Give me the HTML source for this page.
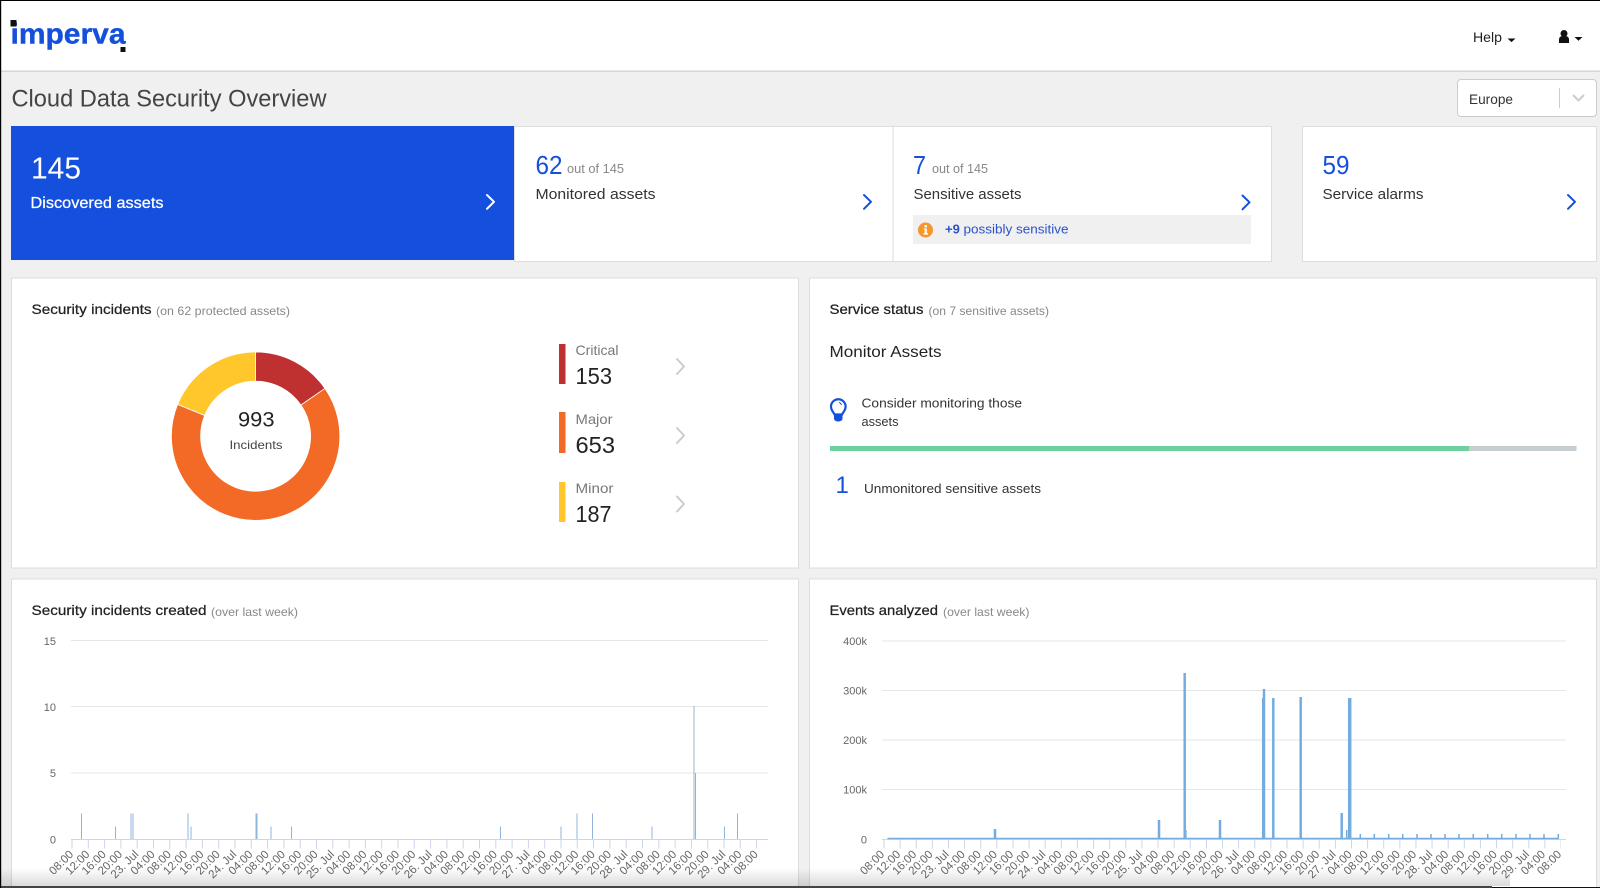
<!DOCTYPE html>
<html lang="en">
<head>
<meta charset="utf-8">
<title>Cloud Data Security Overview</title>
<style>
html,body{margin:0;padding:0;width:1600px;height:888px;overflow:hidden;background:#f0f0f0}
svg{display:block}
text{font-family:"Liberation Sans",sans-serif}
.t{font-size:14px;fill:#222;stroke:#222;stroke-width:.25}
.s{font-size:12px;fill:#888}
.c{fill:none;stroke-width:2;stroke-linecap:round;stroke-linejoin:round}
.y{font-size:11px;fill:#666;text-anchor:end}
.x text{font-size:11.5px;fill:#666;text-anchor:end}
</style>
</head>
<body>
<svg width="1600" height="888" viewBox="0 0 1600 888" xmlns="http://www.w3.org/2000/svg">
<defs><linearGradient id="fade" x1="0" y1="0" x2="0" y2="1"><stop offset="0" stop-color="#000" stop-opacity="0"/><stop offset="1" stop-color="#000" stop-opacity=".14"/></linearGradient></defs>
<rect width="1600" height="888" fill="#f0f0f0"/>
<!-- header -->
<rect width="1600" height="71" fill="#fff"/>
<rect y="70.5" width="1600" height="1.5" fill="#d6d6d6"/>
<text x="10.5" y="43.5" font-size="29" font-weight="700" fill="#1550dc" stroke="#1550dc" stroke-width=".4" textLength="115" lengthAdjust="spacingAndGlyphs">imperva</text>
<rect x="10.5" y="20" width="6" height="6.500" fill="#111"/>
<rect x="120.5" y="47" width="5" height="5" fill="#111"/>
<text x="1473" y="42" font-size="14" fill="#222" textLength="29" lengthAdjust="spacingAndGlyphs">Help</text>
<path d="M1507.5 38.5h8l-4 3.6z" fill="#111"/>
<circle cx="1564" cy="33.5" r="3.5" fill="#111"/>
<path d="M1559 43v-3.5c0-2 1.4-3.3 2.6-3.3h4.800c1.200 0 2.600 1.300 2.600 3.300V43z" fill="#111"/>
<path d="M1574.500 37h8l-4 3.800z" fill="#111"/>
<!-- title + select -->
<text x="11.500" y="106.500" font-size="24" fill="#444" textLength="315" lengthAdjust="spacingAndGlyphs">Cloud Data Security Overview</text>
<rect x="1457.500" y="79.500" width="139" height="37" rx="3.500" fill="#fff" stroke="#ccc"/>
<text x="1469" y="104" font-size="14" fill="#333" textLength="44" lengthAdjust="spacingAndGlyphs">Europe</text>
<rect x="1559" y="88" width="1" height="20" fill="#ccc"/>
<path d="M1573 95l5.500 5.500 5.500-5.500" fill="none" stroke="#ccc" stroke-width="2"/>
<!-- KPI cards -->
<rect x="11" y="126" width="503" height="134" fill="#1450dd"/>
<text x="31" y="178.500" font-size="31" fill="#fff" textLength="50" lengthAdjust="spacingAndGlyphs">145</text>
<text x="30.500" y="208" font-size="16" fill="#fff" stroke="#fff" stroke-width=".25" textLength="133" lengthAdjust="spacingAndGlyphs">Discovered assets</text>
<path class="c" d="M487 195l7 6.800-7 7" stroke="#fff"/>
<rect x="514.500" y="126.500" width="757" height="135" fill="#fff" stroke="#ddd"/>
<rect x="892.500" y="126" width="1" height="135" fill="#ddd"/>
<text x="535.500" y="174" font-size="26" fill="#1550dc" textLength="27" lengthAdjust="spacingAndGlyphs">62</text>
<text x="567" y="173" font-size="12.500" fill="#888" textLength="57" lengthAdjust="spacingAndGlyphs">out of 145</text>
<text x="535.500" y="199" font-size="15" fill="#333" textLength="120" lengthAdjust="spacingAndGlyphs">Monitored assets</text>
<path class="c" d="M864 195l7 6.800-7 7" stroke="#1550dc"/>
<text x="913" y="174" font-size="26" fill="#1550dc" textLength="13" lengthAdjust="spacingAndGlyphs">7</text>
<text x="932" y="173" font-size="12.500" fill="#888" textLength="56" lengthAdjust="spacingAndGlyphs">out of 145</text>
<text x="913.500" y="199" font-size="15" fill="#333" textLength="108" lengthAdjust="spacingAndGlyphs">Sensitive assets</text>
<path class="c" d="M1242.500 195.500l7 6.800-7 7" stroke="#1550dc"/>
<rect x="913" y="215" width="338" height="29" fill="#f0f0f0"/>
<circle cx="925.500" cy="230" r="7.500" fill="#f7962b"/>
<rect x="924.500" y="225" width="2.400" height="2.400" fill="#fff"/>
<path d="M923.800 228.500h3.100v4.700h1.100v1.400h-4.500v-1.400h1.100v-3.300h-.8z" fill="#fff"/>
<text x="945" y="233.500" font-size="13" font-weight="700" fill="#2a52c8">+9</text>
<text x="963.500" y="233.500" font-size="13" fill="#2a52c8" textLength="105" lengthAdjust="spacingAndGlyphs">possibly sensitive</text>
<rect x="1302.500" y="126.500" width="294" height="135" fill="#fff" stroke="#ddd"/>
<text x="1322.500" y="174" font-size="26" fill="#1550dc" textLength="27" lengthAdjust="spacingAndGlyphs">59</text>
<text x="1322.500" y="199" font-size="15" fill="#333" textLength="101" lengthAdjust="spacingAndGlyphs">Service alarms</text>
<path class="c" d="M1568 195l7 6.800-7 7" stroke="#1550dc"/>
<!-- panels -->
<rect x="11.500" y="278" width="787" height="290" fill="#fff" stroke="#ddd"/>
<rect x="809.500" y="278" width="787" height="290" fill="#fff" stroke="#ddd"/>
<rect x="11.500" y="579" width="787" height="320" fill="#fff" stroke="#ddd"/>
<rect x="809.500" y="579" width="787" height="320" fill="#fff" stroke="#ddd"/>
<!-- security incidents -->
<text class="t" x="31.500" y="314" textLength="120" lengthAdjust="spacingAndGlyphs">Security incidents</text>
<text class="s" x="156" y="315" textLength="134" lengthAdjust="spacingAndGlyphs">(on 62 protected assets)</text>
<path d="M255.600 352A84.200 84.200 0 0 1 324.960 388.470L300.910 405.020A55 55 0 0 0 255.600 381.200Z" fill="#bf3030" stroke="#fff" stroke-width=".8"/>
<path d="M324.960 388.470A84.200 84.200 0 1 1 177.640 404.390L204.680 415.420A55 55 0 1 0 300.910 405.020Z" fill="#f26a25" stroke="#fff" stroke-width=".8"/>
<path d="M177.640 404.390A84.200 84.200 0 0 1 255.600 352L255.600 381.200A55 55 0 0 0 204.680 415.420Z" fill="#ffc72c" stroke="#fff" stroke-width=".8"/>
<text x="238" y="426.500" font-size="21" fill="#222" textLength="36.500" lengthAdjust="spacingAndGlyphs">993</text>
<text x="229.500" y="449" font-size="12" fill="#444" textLength="53" lengthAdjust="spacingAndGlyphs">Incidents</text>
<rect x="559" y="344" width="6.500" height="40" fill="#bf3030"/>
<rect x="559" y="412" width="6.500" height="41" fill="#f26a25"/>
<rect x="559" y="482" width="6.500" height="40" fill="#ffc72c"/>
<text x="575.500" y="355" font-size="14" fill="#777" textLength="43" lengthAdjust="spacingAndGlyphs">Critical</text>
<text x="575.500" y="384" font-size="23" fill="#222" textLength="36.500" lengthAdjust="spacingAndGlyphs">153</text>
<text x="575.500" y="424" font-size="14" fill="#777" textLength="37" lengthAdjust="spacingAndGlyphs">Major</text>
<text x="575.500" y="453" font-size="23" fill="#222" textLength="39.500" lengthAdjust="spacingAndGlyphs">653</text>
<text x="575.500" y="493" font-size="14" fill="#777" textLength="38" lengthAdjust="spacingAndGlyphs">Minor</text>
<text x="575.500" y="522" font-size="23" fill="#222" textLength="36" lengthAdjust="spacingAndGlyphs">187</text>
<path class="c" d="M677 359l7 7.500-7 7.500" stroke="#ccc"/>
<path class="c" d="M677 428l7 7.500-7 7.500" stroke="#ccc"/>
<path class="c" d="M677 496.500l7 7.500-7 7.500" stroke="#ccc"/>
<!-- service status -->
<text class="t" x="829.500" y="314" textLength="94" lengthAdjust="spacingAndGlyphs">Service status</text>
<text class="s" x="928.500" y="315" textLength="120.500" lengthAdjust="spacingAndGlyphs">(on 7 sensitive assets)</text>
<text x="829.500" y="357" font-size="16" fill="#222" textLength="112" lengthAdjust="spacingAndGlyphs">Monitor Assets</text>
<path d="M834.500 414.500c-1-2.500-3.500-4-3.500-8a7.300 7.300 0 0 1 14.600 0c0 4-2.500 5.500-3.500 8z" fill="none" stroke="#1550dc" stroke-width="2.200"/>
<path d="M834 414h8.500v4.500c0 1.800-1.800 3-4.250 3s-4.250-1.200-4.250-3z" fill="#1550dc"/>
<path d="M839 402.500a3.500 3.500 0 0 1 2.500 2.500" fill="none" stroke="#1550dc" stroke-width="1"/>
<text x="861.500" y="407.500" font-size="13" fill="#333" textLength="160.500" lengthAdjust="spacingAndGlyphs">Consider monitoring those</text>
<text x="861.500" y="426" font-size="13" fill="#333" textLength="37" lengthAdjust="spacingAndGlyphs">assets</text>
<rect x="830" y="446" width="639" height="5" fill="#6ed09d"/>
<rect x="1469" y="446" width="107.500" height="5" fill="#c7ced1"/>
<text x="835.500" y="493" font-size="24" fill="#1550dc">1</text>
<text x="864" y="493" font-size="13" fill="#333" textLength="177" lengthAdjust="spacingAndGlyphs">Unmonitored sensitive assets</text>
<!-- chart 1 -->
<text class="t" x="31.500" y="615" textLength="175" lengthAdjust="spacingAndGlyphs">Security incidents created</text>
<text class="s" x="211" y="616" textLength="87" lengthAdjust="spacingAndGlyphs">(over last week)</text>
<path d="M71 640.500H768M71 706.500H768M71 773H768" stroke="#e6e6e6" fill="none"/>
<path d="M71 839.500H768" stroke="#ccd6eb" fill="none"/>
<path d="M71.500 844H759" stroke="#ccd6eb" stroke-width="9" stroke-dasharray="1 15.300" fill="none"/>
<text class="y" x="56" y="645">15</text>
<text class="y" x="56" y="711">10</text>
<text class="y" x="56" y="777">5</text>
<text class="y" x="56" y="843.500">0</text>
<path fill="none" stroke="#8fb5dd" d="M81.500 813.500V839M115.500 826.500V839M131 813.500V839M133 813.500V839M188 813.500V839M191 826.500V839M256 813.500V839M257 813.500V839M271 826.500V839M291.500 826.500V839M500.500 826.500V839M561 826.500V839M577 813.500V839M592.500 813.500V839M652 826.500V839M694 706V839M695.500 773V839M724.500 826.500V839M737.500 813.500V839"/>
<g class="x">
<text transform="translate(74,855) rotate(-45)">08:00</text><text transform="translate(90.300,855) rotate(-45)">12:00</text><text transform="translate(106.600,855) rotate(-45)">16:00</text><text transform="translate(122.900,855) rotate(-45)">20:00</text><text transform="translate(139.200,855) rotate(-45)">23. Jul</text><text transform="translate(155.500,855) rotate(-45)">04:00</text>
<text transform="translate(171.800,855) rotate(-45)">08:00</text><text transform="translate(188.100,855) rotate(-45)">12:00</text><text transform="translate(204.400,855) rotate(-45)">16:00</text><text transform="translate(220.700,855) rotate(-45)">20:00</text><text transform="translate(237,855) rotate(-45)">24. Jul</text><text transform="translate(253.300,855) rotate(-45)">04:00</text>
<text transform="translate(269.600,855) rotate(-45)">08:00</text><text transform="translate(285.900,855) rotate(-45)">12:00</text><text transform="translate(302.200,855) rotate(-45)">16:00</text><text transform="translate(318.500,855) rotate(-45)">20:00</text><text transform="translate(334.800,855) rotate(-45)">25. Jul</text><text transform="translate(351.100,855) rotate(-45)">04:00</text>
<text transform="translate(367.400,855) rotate(-45)">08:00</text><text transform="translate(383.700,855) rotate(-45)">12:00</text><text transform="translate(400,855) rotate(-45)">16:00</text><text transform="translate(416.300,855) rotate(-45)">20:00</text><text transform="translate(432.600,855) rotate(-45)">26. Jul</text><text transform="translate(448.900,855) rotate(-45)">04:00</text>
<text transform="translate(465.200,855) rotate(-45)">08:00</text><text transform="translate(481.500,855) rotate(-45)">12:00</text><text transform="translate(497.800,855) rotate(-45)">16:00</text><text transform="translate(514.100,855) rotate(-45)">20:00</text><text transform="translate(530.400,855) rotate(-45)">27. Jul</text><text transform="translate(546.700,855) rotate(-45)">04:00</text>
<text transform="translate(563,855) rotate(-45)">08:00</text><text transform="translate(579.300,855) rotate(-45)">12:00</text><text transform="translate(595.600,855) rotate(-45)">16:00</text><text transform="translate(611.900,855) rotate(-45)">20:00</text><text transform="translate(628.200,855) rotate(-45)">28. Jul</text><text transform="translate(644.500,855) rotate(-45)">04:00</text>
<text transform="translate(660.800,855) rotate(-45)">08:00</text><text transform="translate(677.100,855) rotate(-45)">12:00</text><text transform="translate(693.400,855) rotate(-45)">16:00</text><text transform="translate(709.700,855) rotate(-45)">20:00</text><text transform="translate(726,855) rotate(-45)">29. Jul</text><text transform="translate(742.300,855) rotate(-45)">04:00</text>
<text transform="translate(758.600,855) rotate(-45)">08:00</text>
</g>
<!-- chart 2 -->
<text class="t" x="829.500" y="615" textLength="108.500" lengthAdjust="spacingAndGlyphs">Events analyzed</text>
<text class="s" x="943" y="616" textLength="86.500" lengthAdjust="spacingAndGlyphs">(over last week)</text>
<path d="M882 641H1566M882 690.500H1566M882 740H1566M882 789.500H1566" stroke="#e6e6e6" fill="none"/>
<path d="M882 839.500H1566" stroke="#ccd6eb" fill="none"/>
<path d="M883.500 844H1561" stroke="#ccd6eb" stroke-width="9" stroke-dasharray="1 15.120" fill="none"/>
<text class="y" x="867" y="645">400k</text>
<text class="y" x="867" y="694.500">300k</text>
<text class="y" x="867" y="744">200k</text>
<text class="y" x="867" y="793.500">100k</text>
<text class="y" x="867" y="843.500">0</text>
<path d="M887.500 838.500H1559" fill="none" stroke="#74ace0" stroke-width="1.500"/>
<path fill="none" stroke="#74ace0" stroke-width="2.500" d="M995 829V838M1159 820V838M1184.700 673V838M1220 820V838M1264 689V838M1273.300 698V838M1300.700 697V838M1341.700 813V838"/>
<path fill="none" stroke="#74ace0" stroke-width="1.500" d="M1262.700 698V838M1346.700 830V838M1360.300 834V838M1374.300 834V838M1388.700 834V838M1402.700 834V838M1417 834V838M1431 834V838M1445 834V838M1459 834V838M1473.300 834V838M1487.700 834V838M1501.700 834V838M1516 834V838M1530 834V838M1544 834V838M1558.300 834V838"/>
<path fill="none" stroke="#a9cbec" stroke-width="1" d="M1186.500 830V838"/>
<path fill="none" stroke="#74ace0" stroke-width="3.500" d="M1349.700 698V838"/>
<g class="x">
<text transform="translate(885,855) rotate(-45)">08:00</text><text transform="translate(901.100,855) rotate(-45)">12:00</text><text transform="translate(917.200,855) rotate(-45)">16:00</text><text transform="translate(933.400,855) rotate(-45)">20:00</text><text transform="translate(949.500,855) rotate(-45)">23. Jul</text><text transform="translate(965.600,855) rotate(-45)">04:00</text>
<text transform="translate(981.700,855) rotate(-45)">08:00</text><text transform="translate(997.800,855) rotate(-45)">12:00</text><text transform="translate(1014,855) rotate(-45)">16:00</text><text transform="translate(1030.100,855) rotate(-45)">20:00</text><text transform="translate(1046.200,855) rotate(-45)">24. Jul</text><text transform="translate(1062.300,855) rotate(-45)">04:00</text>
<text transform="translate(1078.400,855) rotate(-45)">08:00</text><text transform="translate(1094.600,855) rotate(-45)">12:00</text><text transform="translate(1110.700,855) rotate(-45)">16:00</text><text transform="translate(1126.800,855) rotate(-45)">20:00</text><text transform="translate(1142.900,855) rotate(-45)">25. Jul</text><text transform="translate(1159,855) rotate(-45)">04:00</text>
<text transform="translate(1175.200,855) rotate(-45)">08:00</text><text transform="translate(1191.300,855) rotate(-45)">12:00</text><text transform="translate(1207.400,855) rotate(-45)">16:00</text><text transform="translate(1223.500,855) rotate(-45)">20:00</text><text transform="translate(1239.600,855) rotate(-45)">26. Jul</text><text transform="translate(1255.800,855) rotate(-45)">04:00</text>
<text transform="translate(1271.900,855) rotate(-45)">08:00</text><text transform="translate(1288,855) rotate(-45)">12:00</text><text transform="translate(1304.100,855) rotate(-45)">16:00</text><text transform="translate(1320.200,855) rotate(-45)">20:00</text><text transform="translate(1336.400,855) rotate(-45)">27. Jul</text><text transform="translate(1352.500,855) rotate(-45)">04:00</text>
<text transform="translate(1368.600,855) rotate(-45)">08:00</text><text transform="translate(1384.700,855) rotate(-45)">12:00</text><text transform="translate(1400.800,855) rotate(-45)">16:00</text><text transform="translate(1417,855) rotate(-45)">20:00</text><text transform="translate(1433.100,855) rotate(-45)">28. Jul</text><text transform="translate(1449.200,855) rotate(-45)">04:00</text>
<text transform="translate(1465.300,855) rotate(-45)">08:00</text><text transform="translate(1481.400,855) rotate(-45)">12:00</text><text transform="translate(1497.600,855) rotate(-45)">16:00</text><text transform="translate(1513.700,855) rotate(-45)">20:00</text><text transform="translate(1529.800,855) rotate(-45)">29. Jul</text><text transform="translate(1545.900,855) rotate(-45)">04:00</text>
<text transform="translate(1562,855) rotate(-45)">08:00</text>
</g>
<!-- window edges -->
<rect x="0" y="868" width="1510" height="18" fill="url(#fade)"/>
<rect x="0" y="886" width="1492" height="2" fill="#444"/>
<rect x="1492" y="887" width="108" height="1" fill="#111"/>
<rect width="1600" height="1" fill="#000"/>
<rect width="1.200" height="888" fill="#000"/>
</svg>
</body>
</html>
